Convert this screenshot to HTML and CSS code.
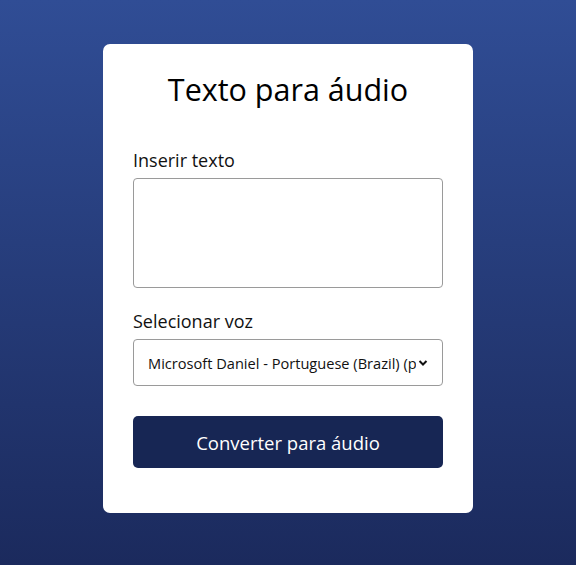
FILE: index.html
```html
<!DOCTYPE html>
<html lang="pt-BR">
<head>
<meta charset="utf-8">
<title>Texto para áudio</title>
<link rel="stylesheet" href="styles.css">
</head>
<body>
<main class="page">
  <section class="card">
    <h1 class="title">Texto para áudio</h1>
    <label class="label" for="texto">Inserir texto</label>
    <textarea id="texto" class="textarea"></textarea>
    <label class="label label-voice" for="voz">Selecionar voz</label>
    <div class="select">
      <span class="select-text">Microsoft Daniel - Portuguese (Brazil) (pt-BR)</span>
      <svg class="chevron" width="10" height="8" viewBox="0 0 10 8"><path d="M1.5 2 L5 5.5 L8.5 2" fill="none" stroke="#111" stroke-width="2"/></svg>
    </div>
    <button class="button">Converter para áudio</button>
  </section>
</main>
</body>
</html>
```
FILE: styles.css
```css
* { box-sizing: border-box; }
html, body { margin: 0; height: 100%; }
body {
  font-family: "Open Sans", "DejaVu Sans", sans-serif;
  background: linear-gradient(180deg, #304d95 0%, #1b2a5d 100%);
}
.page {
  display: flex;
  justify-content: center;
  padding-top: 44px;
}
.card {
  width: 370px;
  background: #fff;
  border-radius: 7px;
  padding: 26px 30px 45px;
  display: flex;
  flex-direction: column;
}
.title {
  margin: 0 0 41px;
  font-size: 30.5px;
  font-weight: 400;
  line-height: 38px;
  text-align: center;
  color: #000;
}
.label {
  font-size: 18px;
  line-height: 22px;
  color: #111;
  margin-bottom: 7px;
}
.label-voice { margin-top: 22px; }
.textarea {
  height: 110px;
  border: 1px solid #9a9a9a;
  border-radius: 4px;
  resize: none;
  font: inherit;
}
.select {
  height: 47px;
  border: 1px solid #9a9a9a;
  border-radius: 4px;
  display: flex;
  align-items: center;
  padding: 0 14px 0 14px;
  gap: 2px;
}
.select-text {
  flex: 1;
  font-size: 14.6px;
  white-space: nowrap;
  overflow: hidden;
  color: #111;
}
.chevron { flex: none; }
.button {
  margin-top: 30px;
  height: 52px;
  border: none;
  border-radius: 5px;
  background: #172654;
  color: #fff;
  font: inherit;
  font-size: 18.5px;
}
```
